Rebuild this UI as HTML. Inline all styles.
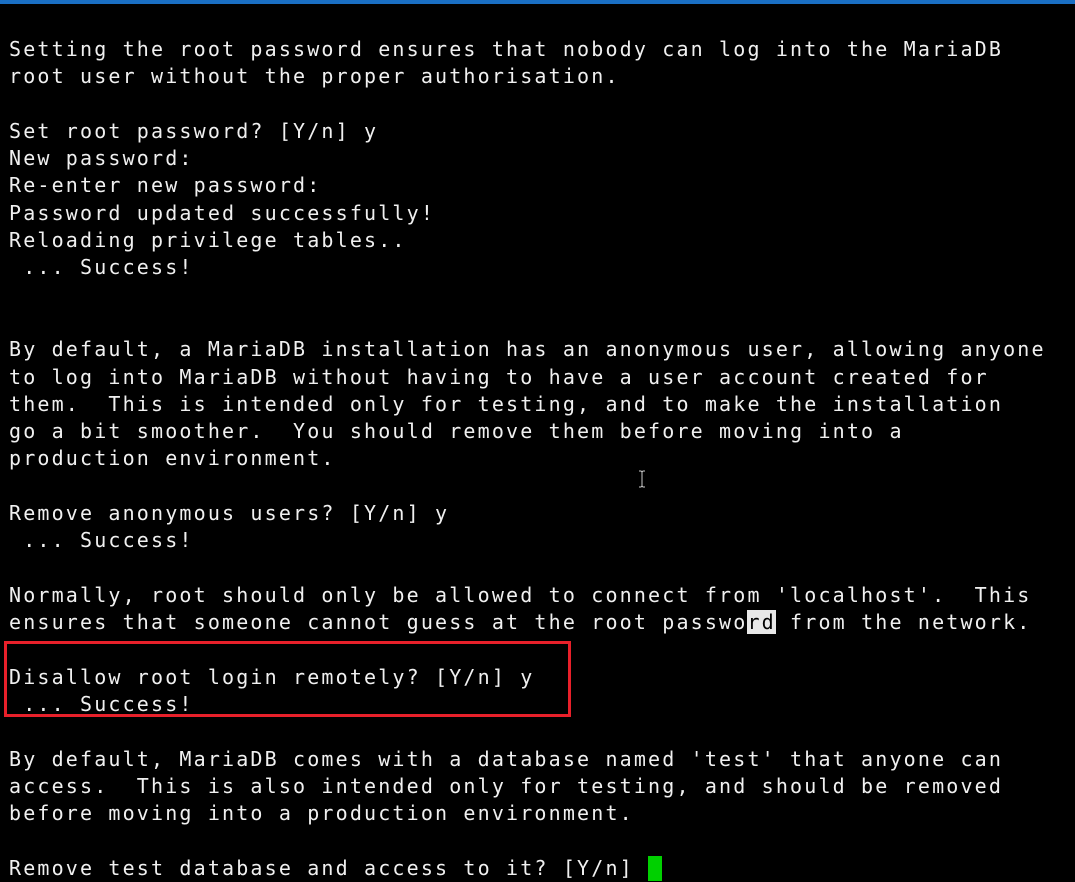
<!DOCTYPE html>
<html><head><meta charset="utf-8"><style>
html,body{margin:0;padding:0;background:#000;width:1075px;height:882px;overflow:hidden;position:relative}
.bar{position:absolute;left:0;top:0;width:1075px;height:4px;background:#1a6fc4}
pre{position:absolute;left:9px;top:36px;margin:0;font-family:"DejaVu Sans Mono","Liberation Mono",monospace;font-size:20px;line-height:27.3px;letter-spacing:2.16px;color:#f0f0f0}
.hl{background:#e8e8e8;color:#000}
.cur{display:inline-block;width:14px;height:25px;background:#00d000;vertical-align:-6px}
.box{position:absolute;left:4px;top:641px;width:561px;height:70px;border:3px solid #e8202a}
.ib{position:absolute;left:637px;top:470px}
</style></head><body>
<div class="bar"></div>
<pre>Setting the root password ensures that nobody can log into the MariaDB
root user without the proper authorisation.

Set root password? [Y/n] y
New password:
Re-enter new password:
Password updated successfully!
Reloading privilege tables..
 ... Success!


By default, a MariaDB installation has an anonymous user, allowing anyone
to log into MariaDB without having to have a user account created for
them.  This is intended only for testing, and to make the installation
go a bit smoother.  You should remove them before moving into a
production environment.

Remove anonymous users? [Y/n] y
 ... Success!

Normally, root should only be allowed to connect from 'localhost'.  This
ensures that someone cannot guess at the root passwo<span class="hl">rd</span> from the network.

Disallow root login remotely? [Y/n] y
 ... Success!

By default, MariaDB comes with a database named 'test' that anyone can
access.  This is also intended only for testing, and should be removed
before moving into a production environment.

Remove test database and access to it? [Y/n] <span class="cur"></span></pre>
<div class="box"></div>
<svg class="ib" width="10" height="18" viewBox="0 0 10 18"><path d="M2 1h2l1 1 1-1h2M5 2v14M2 17h2l1-1 1 1h2" stroke="#ccc" stroke-width="1" fill="none"/></svg>
</body></html>
